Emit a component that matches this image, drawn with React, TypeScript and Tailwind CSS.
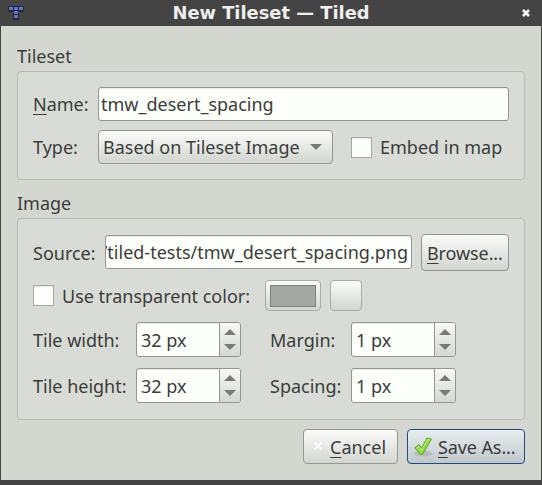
import React from "react";

function Arrow({ down = false }: { down?: boolean }) {
  return (
    <svg width="12" height="6" viewBox="0 0 12 6" className="block">
      <path d={down ? "M0 0H12L6 6Z" : "M0 6H12L6 0Z"} fill="#787a77" />
    </svg>
  );
}

function Group({ title, className, children }: { title: string; className: string; children: React.ReactNode }) {
  return (
    <section>
      <h2 className="h-[29px] leading-[29px]">{title}</h2>
      <div className={`rounded-[4px] border border-[#b9bbb7] bg-[#d9dbd7] px-[15px] ${className}`}>{children}</div>
    </section>
  );
}

function Check() {
  return <span className="size-[21px] shrink-0 border border-[#a5a7a3] bg-[#fdfffc] shadow-[inset_0_1px_0_#e9ebe8]" />;
}

function Field({ className, children }: { className: string; children: React.ReactNode }) {
  return (
    <div className={`flex h-[34px] items-center overflow-hidden rounded-[3px] border border-[#949692] bg-[#fdfffa] shadow-[inset_0_1px_0_#e9ebe7] ${className}`}>
      {children}
    </div>
  );
}

function Spin({ value }: { value: string }) {
  return (
    <div className="flex h-[35px] w-[105px] overflow-hidden rounded-[3px] border border-[#949692] bg-[#fdfffa] shadow-[inset_0_1px_0_#e9ebe7]">
      <span className="w-[82px] pl-[4px] leading-[34px]">{value}</span>
      <span className="flex flex-1 flex-col items-center gap-[9px] border-l border-[#949692] bg-linear-to-b from-[#f8f9f7] to-[#d5d7d3] pt-[6px]">
        <Arrow />
        <Arrow down />
      </span>
    </div>
  );
}

const button = "flex items-center rounded-[4px] border border-[#949692] bg-linear-to-b from-[#fbfcfa] to-[#d3d5d1]";

function Mnemonic({ text }: { text: string }) {
  return (
    <span className="whitespace-nowrap">
      <span className="underline decoration-1 underline-offset-[3px] [text-decoration-skip-ink:none]">{text[0]}</span>
      {text.slice(1)}
    </span>
  );
}

export default function App() {
  return (
    <div className="h-[485px] w-[542px] overflow-hidden bg-[#444444] font-['Noto_Sans',sans-serif] text-[18px] text-[#3b3d3a]">
      <header className="flex h-[26px] items-center bg-[#444444] pl-[8px] pr-[12px]">
        <svg width="16" height="14" viewBox="0 0 16 14" shapeRendering="crispEdges">
          <path d="M0 0H16V6H11V14H5V6H0Z" fill="#292a2e" />
          <path d="M1 1H5V4H1ZM6 1H10V4H6ZM11 1H15V4H11ZM6 5H10V8H6ZM6 9H10V12H6Z" fill="#6370d8" />
        </svg>
        <h1 className="flex-1 pr-[4px] text-center font-['DejaVu_Sans',sans-serif] text-[17.85px] leading-[26px] font-bold text-[#eeeeec]">
          New Tileset — Tiled
        </h1>
        <svg width="8" height="8" viewBox="0 0 8 8">
          <path d="M1 1L7 7M7 1L1 7" stroke="#f4f4f4" strokeWidth="2.6" />
        </svg>
      </header>
      <main className="mx-px h-[454px] bg-[#d4d7d0] px-4 pt-4">
        <Group title="Tileset" className="h-[109px] pt-[15px]">
          <div className="flex items-center">
            <label className="w-[65px]"><Mnemonic text="Name:" /></label>
            <Field className="w-[411px] pl-[2px]">tmw_desert_spacing</Field>
          </div>
          <div className="mt-[9px] flex items-center">
            <label className="w-[65px]">Type:</label>
            <div className={`${button} mr-[18px] h-[34px] w-[235px] justify-between pl-[4px] pr-[10px]`}>
              <span className="whitespace-nowrap">Based on Tileset Image</span>
              <Arrow down />
            </div>
            <Check />
            <span className="ml-2 whitespace-nowrap">Embed in map</span>
          </div>
        </Group>
        <div className="h-[9px]" />
        <Group title="Image" className="h-[202px] pt-[15px]">
          <div className="flex h-[37px] items-center">
            <label className="w-[72px] pt-[2px]">Source:</label>
            <Field className="mr-[9px] mb-px w-[307px] justify-end pr-[3px]">
              <span className="whitespace-nowrap">/tiled-tests/tmw_desert_spacing.png</span>
            </Field>
            <div className={`${button} h-[37px] w-[88px] pt-[2px] pl-[5px] tracking-[-0.1px]`}><Mnemonic text="Browse..." /></div>
          </div>
          <div className="mt-[9px] flex h-[31px] items-center">
            <Check />
            <span className="ml-2 w-[203px] pt-[2px] whitespace-nowrap">Use transparent color:</span>
            <div className={`${button} mr-[9px] h-[31px] w-[56px] justify-center border-[#a9aba7]`}>
              <span className="h-[22px] w-[46px] border border-[#7f817d] bg-[#a5a7a3]" />
            </div>
            <div className={`${button} h-[31px] w-[32px] border-[#a9aba7]`} />
          </div>
          <div className="mt-[11px] grid grid-cols-[103px_134px_81px_105px] items-center gap-y-[11px]">
            <label className="pt-[2px]">Tile width:</label>
            <Spin value="32 px" />
            <label className="pt-[2px]">Margin:</label>
            <Spin value="1 px" />
            <label className="pt-[2px] whitespace-nowrap">Tile height:</label>
            <Spin value="32 px" />
            <label className="pt-[2px]">Spacing:</label>
            <Spin value="1 px" />
          </div>
        </Group>
        <footer className="mt-[9px] flex justify-end gap-[9px]">
          <div className={`${button} h-[35px] w-[95px] pt-[2px] pl-[9px]`}>
            <svg width="10" height="10" viewBox="0 0 10 10" className="mr-[7px] mb-[3px] shrink-0">
              <path d="M1.5 1.5L8.5 8.5M8.5 1.5L1.5 8.5" stroke="#fbfcfa" strokeWidth="2" />
            </svg>
            <Mnemonic text="Cancel" />
          </div>
          <div className="flex h-[35px] w-[118px] items-center rounded-[4px] border border-[#204a87] bg-linear-to-b from-[#eaeef0] to-[#c0c8cb] pt-[2px] pl-[5px] tracking-[-0.1px]">
            <svg width="20" height="22" viewBox="0 0 20 22" className="mr-[5px] mb-[2px] shrink-0">
              <ellipse cx="10" cy="17.5" rx="9.5" ry="3" fill="#8c9494" opacity="0.35" />
              <path d="M1.8 11.8L6 8.6L8.6 12.2L14 2L18.4 3.2L9.6 18.2L7.4 18.6Z" fill="#8cdc3c" stroke="#5b9f28" strokeWidth="1" strokeLinejoin="round" />
              <path d="M3.4 12L5.8 10.2L8.6 14.2L14.6 3.4L16.8 4" fill="none" stroke="#c1f48a" strokeWidth="1" />
            </svg>
            <Mnemonic text="Save As..." />
          </div>
        </footer>
      </main>
    </div>
  );
}
